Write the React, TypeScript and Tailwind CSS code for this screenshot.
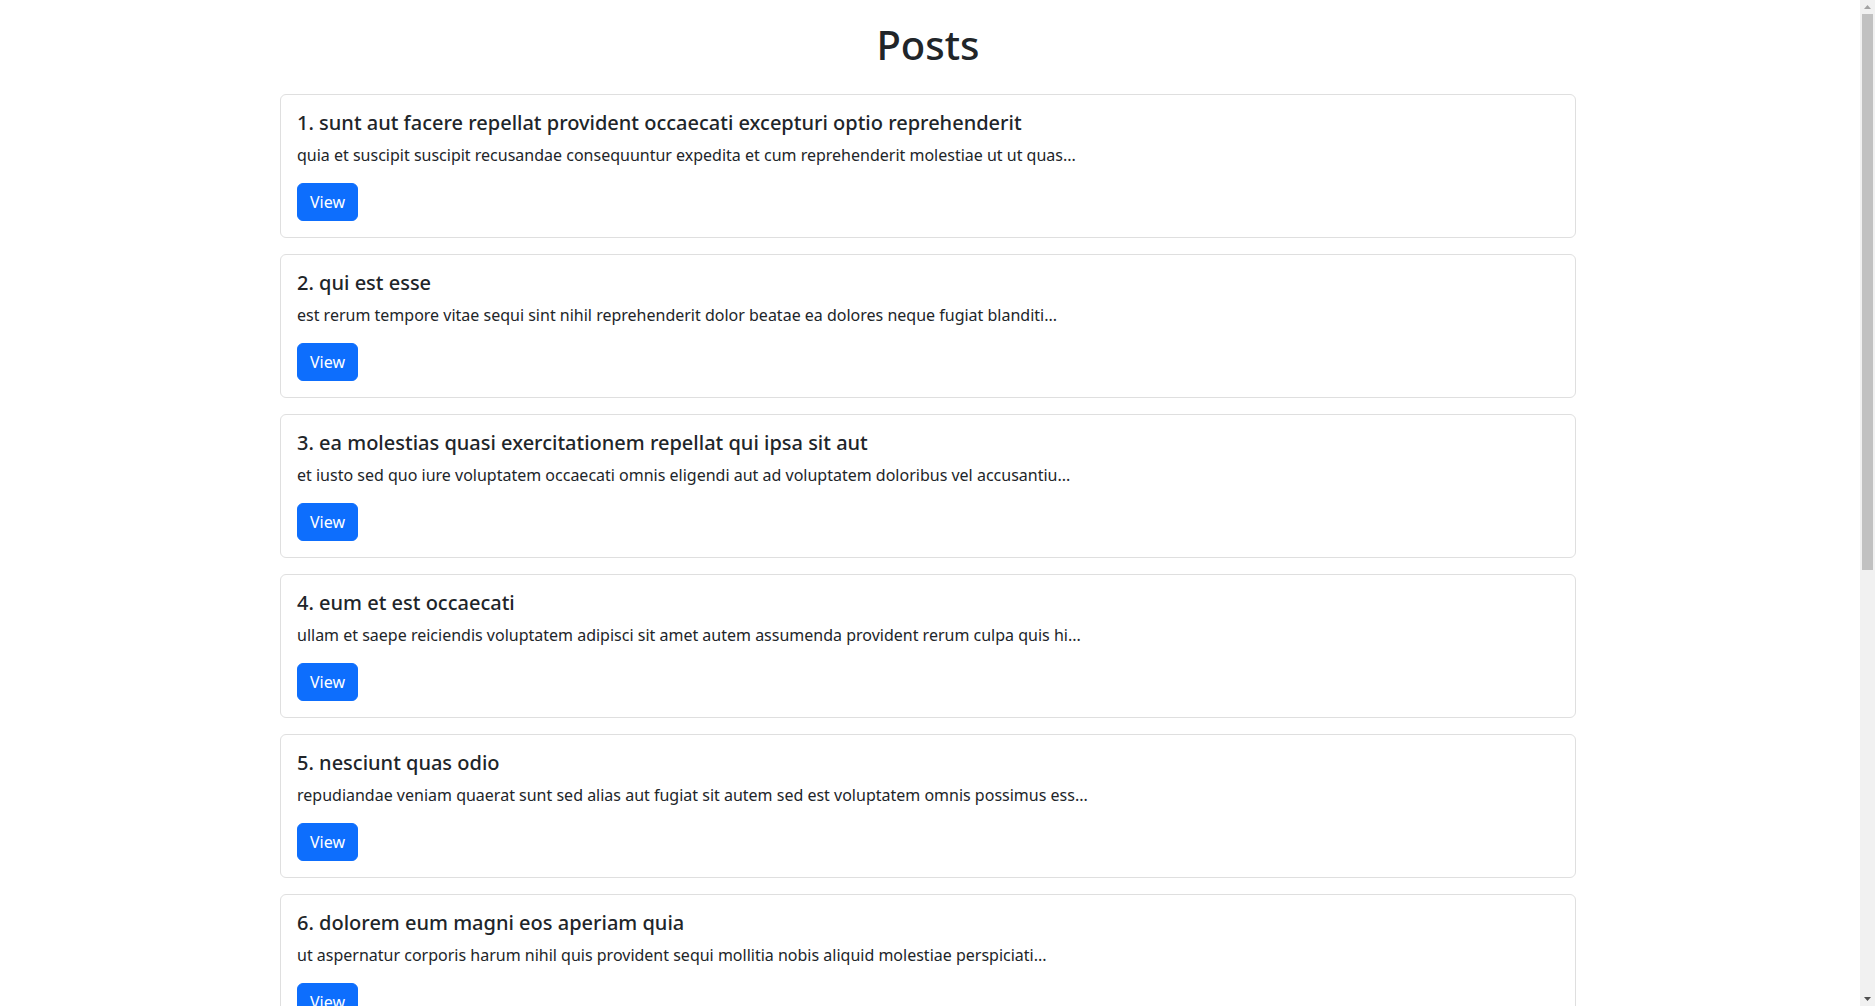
const posts = [
  {
    id: 1,
    title: "sunt aut facere repellat provident occaecati excepturi optio reprehenderit",
    body: "quia et suscipit\nsuscipit recusandae consequuntur expedita et cum\nreprehenderit molestiae ut ut quas totam\nnostrum rerum est autem sunt rem eveniet architecto",
  },
  {
    id: 2,
    title: "qui est esse",
    body: "est rerum tempore vitae\nsequi sint nihil reprehenderit dolor beatae ea dolores neque\nfugiat blanditiis voluptate porro vel nihil molestiae ut reiciendis\nqui aperiam non debitis possimus qui neque nisi nulla",
  },
  {
    id: 3,
    title: "ea molestias quasi exercitationem repellat qui ipsa sit aut",
    body: "et iusto sed quo iure\nvoluptatem occaecati omnis eligendi aut ad\nvoluptatem doloribus vel accusantium quis pariatur\nmolestiae porro eius odio et labore et velit aut",
  },
  {
    id: 4,
    title: "eum et est occaecati",
    body: "ullam et saepe reiciendis voluptatem adipisci\nsit amet autem assumenda provident rerum culpa\nquis hic commodi nesciunt rem tenetur doloremque ipsam iure\nquis sunt voluptatem rerum illo velit",
  },
  {
    id: 5,
    title: "nesciunt quas odio",
    body: "repudiandae veniam quaerat sunt sed\nalias aut fugiat sit autem sed est\nvoluptatem omnis possimus esse voluptatibus quis\nest aut tenetur dolor neque",
  },
  {
    id: 6,
    title: "dolorem eum magni eos aperiam quia",
    body: "ut aspernatur corporis harum nihil quis provident sequi\nmollitia nobis aliquid molestiae\nperspiciatis et ea nemo ab reprehenderit accusantium quas\nvoluptate dolores velit et doloremque molestiae",
  },
  {
    id: 7,
    title: "magnam facilis autem",
    body: "dolore placeat quibusdam ea quo vitae\nmagni quis enim qui quis quo nemo aut saepe\nquidem repellat excepturi ut quia\nsunt ut sequi eos ea sed quas",
  },
  {
    id: 8,
    title: "dolorem dolore est ipsam",
    body: "dignissimos aperiam dolorem qui eum\nfacilis quibusdam animi sint suscipit qui sint possimus cum\nquaerat magni maiores excepturi\nipsam ut commodi dolor voluptatum modi aut vitae",
  },
  {
    id: 9,
    title: "nesciunt iure omnis dolorem tempora et accusantium",
    body: "consectetur animi nesciunt iure dolore\nenim quia ad\nveniam autem ut quam aut nobis\net est aut quod aut provident voluptas autem voluptas",
  },
  {
    id: 10,
    title: "optio molestias id quia eum",
    body: "quo et expedita modi cum officia vel magni\ndoloribus qui repudiandae\nvero nisi sit\nquos veniam quod sed accusamus veritatis error",
  },
];

// classic browser scrollbar, drawn since the page is photographed without one
function Scrollbar() {
  return (
    <div className="w-[15px] shrink-0 bg-[#f1f1f1] flex flex-col">
      <div className="h-[14px] flex items-center justify-center">
        <svg width="7" height="4" viewBox="0 0 7 4">
          <path d="M0 4 L3.5 0 L7 4 Z" fill="#a3a3a3" />
        </svg>
      </div>
      <div className="h-[556px] mx-[2px] bg-[#c1c1c1]" />
      <div className="flex-1" />
      <div className="h-[15px] flex items-center justify-center">
        <svg width="7" height="4" viewBox="0 0 7 4">
          <path d="M0 0 L7 0 L3.5 4 Z" fill="#505050" />
        </svg>
      </div>
    </div>
  );
}

export default function App() {
  return (
    <div
      className="h-screen flex bg-white text-[#212529] overflow-hidden"
      style={{ fontFamily: '"Noto Sans", system-ui, sans-serif' }}
    >
      <main className="flex-1 overflow-hidden pr-[4px] pb-6">
        <div className="w-[1296px] mx-auto">
          <h1 className="text-center text-[40px] leading-[48px] font-medium mt-[21px] mb-[25px]">Posts</h1>

          {posts.map((p) => (
            <div key={p.id} className="mb-4 rounded-md border border-[#dfdfdf] bg-white">
              <div className="p-4">
                <h5 className="text-[20px] leading-6 font-medium mb-2">
                  {p.id}. {p.title}
                </h5>
                <p className="text-base leading-6 mb-4">{p.body.slice(0, 100)}...</p>
                <button
                  type="button"
                  className="h-[38px] px-3 rounded-md border border-[#0d6efd] bg-[#0d6efd] text-white text-base font-normal leading-6"
                >
                  View
                </button>
              </div>
            </div>
          ))}
        </div>
      </main>
      <Scrollbar />
    </div>
  );
}
